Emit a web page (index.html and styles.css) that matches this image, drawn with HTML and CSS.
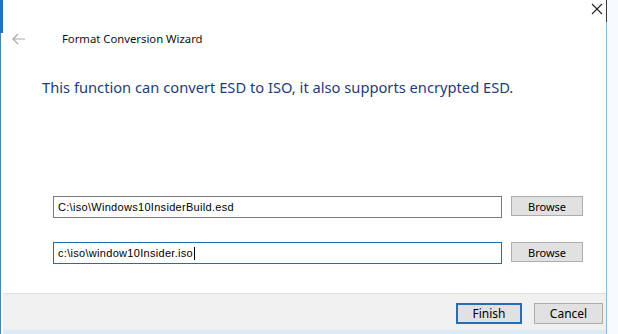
FILE: index.html
```html
<!DOCTYPE html>
<html>
<head>
<meta charset="utf-8">
<link rel="stylesheet" href="styles.css">
</head>
<body>
<div class="screen">
  <div class="edge-left"><div class="edge-left-top"></div><div class="edge-left-rest"></div></div>
  <div class="dialog">
    <div class="dialog-body">
      <div class="titlebar">
        <svg class="back" width="14" height="12" viewBox="0 0 14 12"><path d="M6 1 L1 6 L6 11 M1 6 H13" fill="none" stroke="#a8a8a8" stroke-width="1.2"/></svg>
        <span class="title">Format Conversion Wizard</span>
        <svg class="close" width="12" height="12" viewBox="0 0 12 12"><path d="M1 1 L11 11 M11 1 L1 11" fill="none" stroke="#222" stroke-width="1.1"/></svg>
      </div>
      <h1 class="instruction">This function can convert ESD to ISO, it also supports encrypted ESD.</h1>
      <div class="fields">
        <div class="field-row">
          <div class="textbox">C:\iso\Windows10InsiderBuild.esd</div>
          <button class="btn browse">Browse</button>
        </div>
        <div class="field-row">
          <div class="textbox focused">c:\iso\window10Insider.iso<span class="caret"></span></div>
          <button class="btn browse">Browse</button>
        </div>
      </div>
    </div>
    <div class="footer">
      <button class="btn action default">Finish</button>
      <button class="btn action cancel">Cancel</button>
    </div>
    <div class="bottom-strip"></div>
  </div>
  <div class="edge-right"><div class="edge-right-top"></div><div class="edge-right-rest"></div></div>
</div>
</body>
</html>
```

FILE: styles.css
```css
* { box-sizing: border-box; }
html, body { margin: 0; padding: 0; }
body { width: 618px; height: 334px; overflow: hidden; background: #fff; }

.screen { display: flex; width: 618px; height: 334px; }

.edge-left { width: 3px; display: flex; flex-direction: column; background: #fff; }
.edge-left-top { height: 33px; background: #1a73c4; }
.edge-left-rest { flex: 1; width: 1px; background: #3f86c9; }

.dialog { flex: 1; display: flex; flex-direction: column; min-width: 0; }
.dialog-body { flex: 1; background: #fff; display: flex; flex-direction: column; }

.titlebar { height: 62px; display: flex; align-items: flex-start; padding: 32px 0 0 9px; position: relative; }
.back { margin-top: 1px; }
.title { font-family: "Noto Sans", sans-serif; font-size: 11.3px; color: #111; margin-left: 36px; line-height: 13px; }
.close { position: absolute; right: 3px; top: 3px; }

.instruction { margin: 15px 0 0 39px; font-family: "Noto Sans", sans-serif; font-weight: normal; font-size: 14.7px; color: #1f3c7a; line-height: 20px; }

.fields { margin: 99px 0 0 50px; display: flex; flex-direction: column; gap: 24px; }
.field-row { display: flex; align-items: flex-start; gap: 9px; height: 22px; }
.textbox { width: 449px; height: 22px; border: 1px solid #7a7a7a; background: #fff; font-family: "Liberation Sans", sans-serif; font-size: 11px; letter-spacing: 0.3px; color: #000; padding: 4px 0 0 4px; line-height: 13px; display: flex; align-items: flex-start; }
.textbox.focused { border-color: #1a70b0; }
.caret { display: inline-block; width: 1px; height: 13px; background: #000; margin-left: 1px; }

.btn { font-family: "Noto Sans", sans-serif; font-size: 11px; color: #000; background: #e1e1e1; border: 1px solid #adadad; padding: 0; margin: 0; display: flex; align-items: center; justify-content: center; }
.browse { width: 72px; height: 20px; }

.footer { height: 37px; background: #f0f0f0; border-top: 1px solid #dfdfdf; display: flex; justify-content: flex-end; align-items: flex-start; padding: 9px 3px 0 0; gap: 12px; }
.action { height: 21px; font-size: 12px; }
.action.default { border: 2px solid #2a6bb3; width: 66px; }
.action.cancel { width: 69px; }

.bottom-strip { height: 4px; background: #dceaf5; }

.edge-right { width: 12px; display: flex; flex-direction: column; background: #f7fafd; }
.edge-right-top { height: 22px; width: 1px; background: #3a3a3a; }
.edge-right-rest { flex: 1; width: 1px; background: #8ab8e0; }
```
